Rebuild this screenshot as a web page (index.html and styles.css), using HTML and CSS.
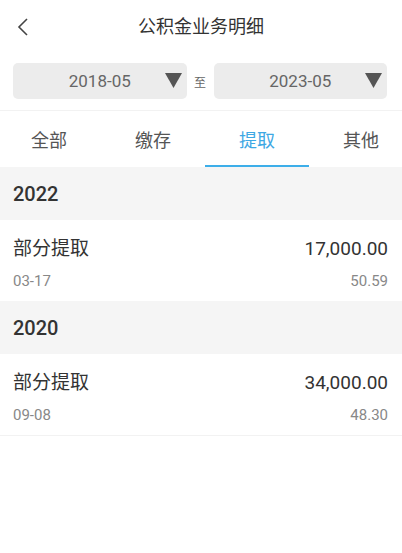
FILE: index.html
```html
<!DOCTYPE html>
<html lang="zh-CN">
<head>
  <meta charset="UTF-8" />
  <meta name="viewport" content="width=device-width, initial-scale=1.0" />
  <title>公积金业务明细</title>
  <link rel="stylesheet" href="styles.css">
</head>
<body>
  <div class="topbar">
    <svg class="back" width="12" height="20" viewBox="0 0 12 20">
      <polyline points="10,2 2,10 10,18" fill="none" stroke="#444" stroke-width="1.6" />
    </svg>
    <div class="title">公积金业务明细</div>
  </div>

  <div class="filter">
    <div class="datebox">
      <span>2018-05</span>
      <svg class="arrow" width="17" height="15" viewBox="0 0 17 15"><polygon points="0,0 17,0 8.5,15" fill="#555" /></svg>
    </div>
    <div class="to">至</div>
    <div class="datebox">
      <span>2023-05</span>
      <svg class="arrow" width="17" height="15" viewBox="0 0 17 15"><polygon points="0,0 17,0 8.5,15" fill="#555" /></svg>
    </div>
  </div>

  <div class="tabs">
    <div class="tab">全部</div>
    <div class="tab">缴存</div>
    <div class="tab active">提取</div>
    <div class="tab">其他</div>
  </div>

  <div class="year">2022</div>
  <div class="item">
    <div class="line">
      <span class="name">部分提取</span>
      <span class="amount">17,000.00</span>
    </div>
    <div class="line sub">
      <span>03-17</span>
      <span>50.59</span>
    </div>
  </div>

  <div class="year">2020</div>
  <div class="item last">
    <div class="line">
      <span class="name">部分提取</span>
      <span class="amount">34,000.00</span>
    </div>
    <div class="line sub">
      <span>09-08</span>
      <span>48.30</span>
    </div>
  </div>
</body>
</html>
```

FILE: styles.css
```css
body {
  margin: 0;
  padding: 0;
  background: #fff;
  font-family: Roboto, "Noto Sans CJK SC", sans-serif;
  color: #333;
  -webkit-font-smoothing: antialiased;
}

/* Top bar */
.topbar {
  height: 54px;
  display: flex;
  align-items: center;
  justify-content: center;
  position: relative;
}
.back {
  position: absolute;
  left: 17px;
  top: 17px;
}
.title {
  font-size: 18px;
  color: #333;
  line-height: 22px;
}

/* Date range filter */
.filter {
  display: flex;
  align-items: center;
  padding: 9px 15px 11px 13px;
  border-bottom: 1px solid #f2f2f2;
}
.datebox {
  flex: 1;
  height: 36px;
  background: #ececec;
  border-radius: 5px;
  display: flex;
  align-items: center;
  justify-content: center;
  position: relative;
  font-size: 17px;
  color: #666;
}
.datebox .arrow {
  position: absolute;
  right: 5px;
  top: 10px;
}
.to {
  width: 27px;
  text-align: center;
  font-size: 12px;
  color: #666;
}

/* Tabs */
.tabs {
  display: flex;
  height: 56px;
  margin-left: -3px;
}
.tab {
  width: 104px;
  flex: none;
  display: flex;
  align-items: center;
  justify-content: center;
  font-size: 18px;
  color: #555;
  box-sizing: border-box;
  border-bottom: 2px solid transparent;
  padding-top: 2px;
}
.tab.active {
  color: #3ea8e4;
  border-bottom-color: #3daee9;
}

/* Year group header */
.year {
  height: 53px;
  background: #f5f5f5;
  display: flex;
  align-items: center;
  padding: 0 13px;
  font-size: 20px;
  font-weight: 500;
  color: #333;
}

/* Records */
.item {
  height: 81px;
  box-sizing: border-box;
  padding: 17px 14px 0 13px;
}
.item.last {
  border-bottom: 1px solid #f2f2f2;
  height: 82px;
}
.line {
  display: flex;
  justify-content: space-between;
  align-items: center;
  font-size: 19px;
  line-height: 24px;
  color: #333;
}
.line.sub {
  margin-top: 10px;
  font-size: 15px;
  line-height: 20px;
  color: #888;
}
```
